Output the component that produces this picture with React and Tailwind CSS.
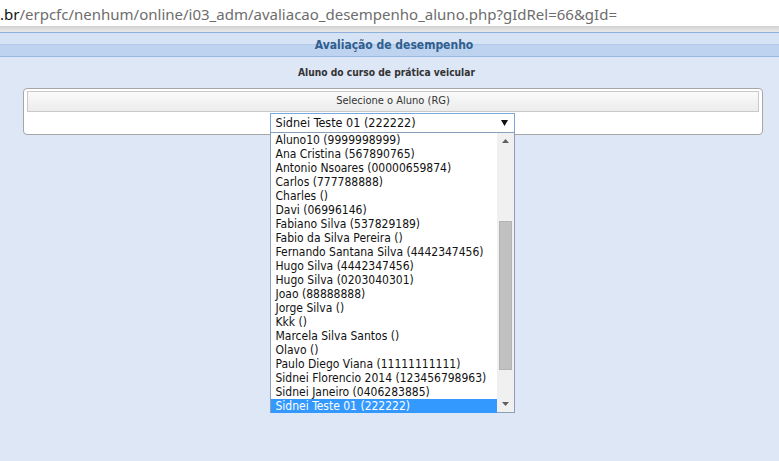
import React from "react";

const items = [
  "Aluno10 (9999998999)",
  "Ana Cristina (567890765)",
  "Antonio Nsoares (00000659874)",
  "Carlos (777788888)",
  "Charles ()",
  "Davi (06996146)",
  "Fabiano Silva (537829189)",
  "Fabio da Silva Pereira ()",
  "Fernando Santana Silva (4442347456)",
  "Hugo Silva (4442347456)",
  "Hugo Silva (0203040301)",
  "Joao (88888888)",
  "Jorge Silva ()",
  "Kkk ()",
  "Marcela Silva Santos ()",
  "Olavo ()",
  "Paulo Diego Viana (11111111111)",
  "Sidnei Florencio 2014 (123456798963)",
  "Sidnei Janeiro (0406283885)",
  "Sidnei Teste 01 (222222)",
];

const listFont = { fontFamily: '"DejaVu Sans Condensed", "DejaVu Sans", sans-serif' };

export default function App() {
  return (
    <div className="w-[779px] h-[461px] flex flex-col bg-[#dee7f6] overflow-hidden">
      <div
        className="h-[26px] bg-white flex items-center pt-[2px] text-[15px] leading-none text-[#6d6d6d] whitespace-nowrap"
        style={{ fontFamily: '"Noto Sans", "Open Sans", sans-serif' }}
      >
        <span className="text-[#111]">.br</span>
        <span>/erpcfc/nenhum/online/i03_adm/avaliacao_desempenho_aluno.php?gIdRel=66&amp;gId=</span>
      </div>
      <div className="h-[6px] bg-gradient-to-b from-[#d2d2d2] to-[#e9e9e9]" />
      <div className="h-[25px] border-t border-[#8fb1dc] border-b border-b-[#97b9e3] flex flex-col relative">
        <div className="h-[11px] bg-[#d5e3f5]" />
        <div className="flex-1 bg-[#bed3ef] border-t border-[#b3cbeb]" />
        <div className="absolute inset-0 flex items-center justify-center pl-[9px] pt-[1px]">
          <span
            className="text-[12px] font-bold text-[#2f5f8e]"
            style={{ fontFamily: '"DejaVu Sans Condensed", "DejaVu Sans", sans-serif' }}
          >
            Avaliação de desempenho
          </span>
        </div>
      </div>
      <div className="flex flex-col items-center pt-[9px] pr-[6px]">
        <div
          className="text-[10.2px] font-bold text-[#333] leading-[14px]"
          style={{ fontFamily: '"DejaVu Sans Condensed", "DejaVu Sans", sans-serif' }}
        >
          Aluno do curso de prática veicular
        </div>
      </div>
      <div className="ml-[23px] mr-[16px] mt-[8px] h-[47px] bg-white border border-[#a6a6a6] rounded-[4px] px-[3px] pt-[2px] flex flex-col">
        <div
          className="h-[21px] border border-[#c9c9c9] bg-gradient-to-b from-[#fafafa] to-[#ececec] flex items-center justify-center text-[11px] text-[#333]"
          style={{ fontFamily: '"DejaVu Sans Condensed", "DejaVu Sans", sans-serif' }}
        >
          Selecione o Aluno (RG)
        </div>
        <div className="flex justify-center mt-[1px] pr-[2px]">
          <div className="relative w-[245px]">
            <div
              className="h-[20px] border border-[#7ba7e1] bg-white flex items-center pl-[5px] pr-[4px] text-[12.5px] text-[#111]"
              style={listFont}
            >
              <span className="flex-1 whitespace-nowrap">Sidnei Teste 01 (222222)</span>
              <svg width="7" height="6" viewBox="0 0 7 6" className="mr-[2px]">
                <polygon points="0,0 7,0 3.5,6" fill="#111" />
              </svg>
            </div>
            <div className="absolute left-0 top-[19px] w-[245px] h-[281px] border border-[#8a9fb8] bg-white flex z-10">
              <div className="flex-1 flex flex-col" style={listFont}>
                {items.map((it, i) => {
                  const sel = i === items.length - 1;
                  return (
                    <div
                      key={i}
                      className={
                        "h-[14px] leading-[14px] pl-[5px] text-[12px] whitespace-nowrap " +
                        (sel ? "bg-[#3399ff] text-white" : "text-[#111]")
                      }
                    >
                      {it}
                    </div>
                  );
                })}
              </div>
              <div className="w-[17px] bg-[#f0f0f0] flex flex-col items-center">
                <div className="h-[16px] flex items-center justify-center">
                  <svg width="7" height="4" viewBox="0 0 7 4">
                    <polygon points="0,4 7,4 3.5,0" fill="#606060" />
                  </svg>
                </div>
                <div className="h-[72px]" />
                <div className="w-[13px] h-[149px] bg-[#c1c1c1] border border-[#b4b4b4]" />
                <div className="flex-1" />
                <div className="h-[16px] flex items-center justify-center">
                  <svg width="7" height="4" viewBox="0 0 7 4">
                    <polygon points="0,0 7,0 3.5,4" fill="#606060" />
                  </svg>
                </div>
              </div>
            </div>
          </div>
        </div>
      </div>
    </div>
  );
}
